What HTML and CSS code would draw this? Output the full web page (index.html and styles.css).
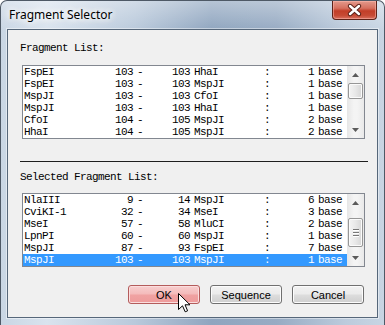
FILE: index.html
```html
<!DOCTYPE html>
<html lang="en">
  <head>
    <meta charset="UTF-8" />
    <title>Fragment Selector</title>
    <link rel="stylesheet" href="styles.css">
  </head>
  <body>
    <div class="window">
      <div class="titlebar">
        <span class="title">Fragment Selector</span>
        <div class="closeBtn">
          <svg width="45" height="19" viewBox="0 0 45 19">
            <path d="M18 5 L27 13 M27 5 L18 13" stroke="#5a2118" stroke-width="4.4" stroke-linecap="round" fill="none"/>
            <path d="M18 5 L27 13 M27 5 L18 13" stroke="#ffffff" stroke-width="2.4" stroke-linecap="round" fill="none"/>
          </svg>
        </div>
      </div>

      <div class="client">
        <div class="label">Fragment List:</div>
        <div class="listbox">
          <div class="rows">
            <div class="row"><span>FspEI</span><span class="r">103</span><span class="c">-</span><span class="r">103</span><span class="n2">HhaI</span><span class="c">:</span><span class="r">1</span><span class="b">base</span></div>
            <div class="row"><span>FspEI</span><span class="r">103</span><span class="c">-</span><span class="r">103</span><span class="n2">MspJI</span><span class="c">:</span><span class="r">1</span><span class="b">base</span></div>
            <div class="row"><span>MspJI</span><span class="r">103</span><span class="c">-</span><span class="r">103</span><span class="n2">CfoI</span><span class="c">:</span><span class="r">1</span><span class="b">base</span></div>
            <div class="row"><span>MspJI</span><span class="r">103</span><span class="c">-</span><span class="r">103</span><span class="n2">HhaI</span><span class="c">:</span><span class="r">1</span><span class="b">base</span></div>
            <div class="row"><span>CfoI</span><span class="r">104</span><span class="c">-</span><span class="r">105</span><span class="n2">MspJI</span><span class="c">:</span><span class="r">2</span><span class="b">base</span></div>
            <div class="row"><span>HhaI</span><span class="r">104</span><span class="c">-</span><span class="r">105</span><span class="n2">MspJI</span><span class="c">:</span><span class="r">2</span><span class="b">base</span></div>
          </div>
          <div class="scrollbar">
            <div class="arrow"><svg width="7" height="4" viewBox="0 0 7 4"><path d="M0 4 L3.5 0 L7 4 Z" fill="#5b5b5b"/></svg></div>
            <div class="track"><div class="thumb thumb1"></div></div>
            <div class="arrow"><svg width="7" height="4" viewBox="0 0 7 4"><path d="M0 0 L3.5 4 L7 0 Z" fill="#5b5b5b"/></svg></div>
          </div>
        </div>

        <div class="sep"></div>

        <div class="label label2">Selected Fragment List:</div>
        <div class="listbox list2">
          <div class="rows">
            <div class="row"><span>NlaIII</span><span class="r">9</span><span class="c">-</span><span class="r">14</span><span class="n2">MspJI</span><span class="c">:</span><span class="r">6</span><span class="b">base</span></div>
            <div class="row"><span>CviKI-1</span><span class="r">32</span><span class="c">-</span><span class="r">34</span><span class="n2">MseI</span><span class="c">:</span><span class="r">3</span><span class="b">base</span></div>
            <div class="row"><span>MseI</span><span class="r">57</span><span class="c">-</span><span class="r">58</span><span class="n2">MluCI</span><span class="c">:</span><span class="r">2</span><span class="b">base</span></div>
            <div class="row"><span>LpnPI</span><span class="r">60</span><span class="c">-</span><span class="r">60</span><span class="n2">MspJI</span><span class="c">:</span><span class="r">1</span><span class="b">base</span></div>
            <div class="row"><span>MspJI</span><span class="r">87</span><span class="c">-</span><span class="r">93</span><span class="n2">FspEI</span><span class="c">:</span><span class="r">7</span><span class="b">base</span></div>
            <div class="row selected"><span>MspJI</span><span class="r">103</span><span class="c">-</span><span class="r">103</span><span class="n2">MspJI</span><span class="c">:</span><span class="r">1</span><span class="b">base</span></div>
          </div>
          <div class="scrollbar">
            <div class="arrow"><svg width="7" height="4" viewBox="0 0 7 4"><path d="M0 4 L3.5 0 L7 4 Z" fill="#5b5b5b"/></svg></div>
            <div class="track"><div class="thumb thumb2"><span class="grip"></span><span class="grip"></span><span class="grip"></span></div></div>
            <div class="arrow"><svg width="7" height="4" viewBox="0 0 7 4"><path d="M0 0 L3.5 4 L7 0 Z" fill="#5b5b5b"/></svg></div>
          </div>
        </div>

        <div class="buttons">
          <button type="button" class="btn btnOk">OK</button>
          <button type="button" class="btn">Sequence</button>
          <button type="button" class="btn">Cancel</button>
        </div>
      </div>

      <svg class="cursor" width="13" height="20" viewBox="0 0 13 20">
        <path d="M0.5 0.5 L0.5 16.5 L4.5 12.8 L7.2 18.8 L9.6 17.8 L7 11.8 L12 11.8 Z" fill="#ffffff" stroke="#000000" stroke-width="1" stroke-linejoin="miter"/>
      </svg>
    </div>
  </body>
</html>
```

FILE: styles.css
```css
html,
body {
  margin: 0;
  background: #ffffff;
}

.window {
  position: relative;
  width: 385px;
  height: 325px;
  box-sizing: border-box;
  border: 1px solid #4e5966;
  border-bottom: none;
  border-radius: 7px 7px 0 0;
  background:
    linear-gradient(to bottom, rgba(255, 255, 255, 0.35), rgba(255, 255, 255, 0) 30px),
    linear-gradient(to right, #c9d6e4 0, #d9e3ee 12%, #b9c9db 35%, #8fa5bf 55%, #97abc3 72%, #bccbdc 90%, #c8d5e3 100%);
  display: flex;
  flex-direction: column;
  overflow: hidden;
}

.titlebar {
  height: 28px;
  display: flex;
  align-items: flex-start;
}

.title {
  flex: 1;
  font-family: "Noto Sans", "Open Sans", sans-serif;
  font-size: 12px;
  line-height: 28px;
  padding-left: 8px;
  color: #000000;
  text-shadow: 0 0 6px #ffffff, 0 0 8px #ffffff, 0 0 10px #ffffff;
}

.closeBtn {
  width: 43px;
  height: 18px;
  margin-right: 7px;
  border: 1px solid #5d2218;
  border-top: none;
  border-radius: 0 0 4px 4px;
  background: linear-gradient(to bottom, #e39a8c 0, #d6705f 40%, #c23e28 55%, #c64a34 80%, #d8705f 100%);
  box-shadow: inset 0 0 0 1px rgba(255, 190, 180, 0.5);
  overflow: hidden;
}

.closeBtn svg {
  display: block;
  margin-left: -1px;
}

.client {
  margin: 0 6px 7px 6px;
  height: 289px;
  box-sizing: border-box;
  border: 1px solid #56677a;
  box-shadow: 0 0 0 1px rgba(255, 255, 255, 0.45);
  background: #f0f0f0;
  font-family: "Liberation Mono", "DejaVu Sans Mono", monospace;
  font-size: 11px;
  letter-spacing: -0.6px;
  color: #000000;
}

.label {
  margin: 12px 0 0 12px;
  height: 12px;
  line-height: 12px;
}

.label2 {
  margin-top: 9px;
}

.listbox {
  margin: 11px 12px 0 14px;
  height: 74px;
  box-sizing: border-box;
  border: 1px solid #828790;
  background: #ffffff;
  display: flex;
  overflow: hidden;
}

.list2 {
  margin-top: 10px;
}

.rows {
  flex: 1;
  overflow: hidden;
}

.row {
  height: 12px;
  line-height: 12px;
  padding-left: 1px;
  display: grid;
  grid-template-columns: 79px 30px 14px 43px 74px 6px 44px 1fr;
  white-space: nowrap;
}

.row .r {
  text-align: right;
}

.row .c {
  text-align: center;
}

.row .n2 {
  padding-left: 4px;
}

.row .b {
  padding-left: 4px;
}

.selected {
  background: #3399ff;
  color: #ffffff;
}

.scrollbar {
  width: 17px;
  display: flex;
  flex-direction: column;
  background: linear-gradient(to right, #e6e6e6, #f4f4f4 40%, #f4f4f4 60%, #e9e9e9);
}

.arrow {
  height: 17px;
  display: flex;
  align-items: center;
  justify-content: center;
}

.track {
  flex: 1;
}

.thumb {
  width: 15px;
  margin-left: 1px;
  box-sizing: border-box;
  border: 1px solid #979797;
  border-radius: 2px;
  background: linear-gradient(to right, #f4f4f4, #e8e8e8 50%, #d6d6d6);
  box-shadow: inset 0 0 0 1px #fbfbfb;
}

.thumb1 {
  height: 16px;
}

.thumb2 {
  margin-top: 7px;
  height: 29px;
  display: flex;
  flex-direction: column;
  align-items: center;
  justify-content: center;
  gap: 1px;
}

.grip {
  width: 6px;
  height: 1px;
  background: #777777;
  border-bottom: 1px solid #ffffff;
}

.sep {
  margin: 22px 9px 0 12px;
  height: 1px;
  background: #1e1e1e;
}

.buttons {
  margin: 18px 13px 0 0;
  display: flex;
  justify-content: flex-end;
  gap: 10px;
}

.btn {
  width: 72px;
  height: 19px;
  padding: 0;
  border: 1px solid #707070;
  border-radius: 3px;
  background: linear-gradient(to bottom, #f2f2f2 0, #ebebeb 48%, #dddddd 52%, #cfcfcf 100%);
  box-shadow: inset 0 0 0 1px #fcfcfc;
  font-family: "Liberation Sans", Arial, sans-serif;
  font-size: 11px;
  color: #000000;
}

.btnOk {
  border-color: #b45c5c;
  background: linear-gradient(to bottom, #f8cfcf 0, #f4baba 48%, #f0a2a2 52%, #ee9b9b 100%);
  box-shadow: inset 0 0 0 1px #fbdede;
}

.cursor {
  position: absolute;
  left: 177px;
  top: 292px;
}
```
